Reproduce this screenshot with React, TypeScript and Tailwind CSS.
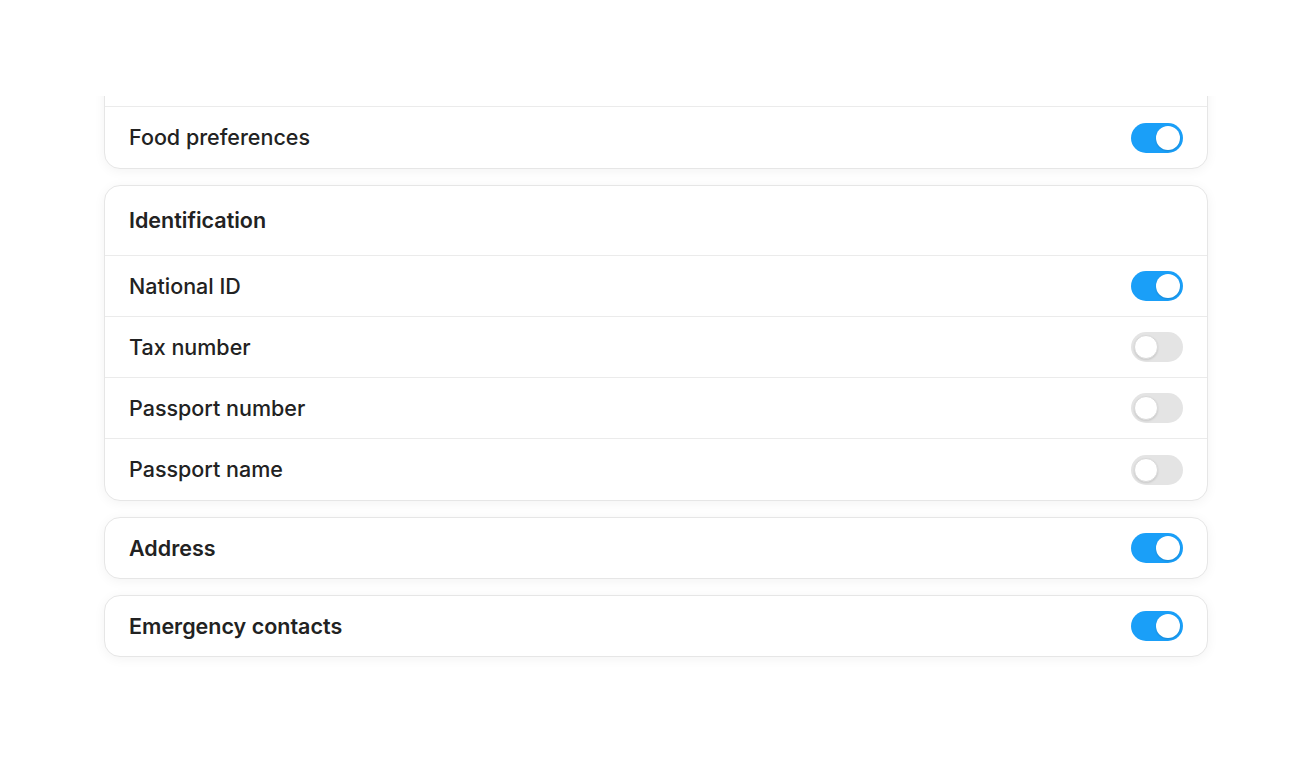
import React, { useState } from 'react';

interface ToggleProps {
  on: boolean;
  onChange: () => void;
}

function Toggle({ on, onChange }: ToggleProps) {
  return (
    <button
      onClick={onChange}
      className={
        on
          ? 'relative h-[30px] w-[52px] shrink-0 rounded-full bg-[#1a9ff8] transition-colors'
          : 'relative h-[30px] w-[52px] shrink-0 rounded-full bg-[#e4e4e4] transition-colors'
      }
    >
      <span
        className={
          on
            ? 'absolute top-[3px] left-[25px] h-[24px] w-[24px] rounded-full bg-white shadow-[0_1px_2px_rgba(0,0,0,0.15)] transition-all'
            : 'absolute top-[3px] left-[3px] h-[24px] w-[24px] rounded-full border border-[#d9d9d9] bg-white shadow-[0_1px_2px_rgba(0,0,0,0.12)] transition-all'
        }
      />
    </button>
  );
}

function Row({ label, on, onChange }: { label: string; on: boolean; onChange: () => void }) {
  return (
    <div className="flex h-[61px] items-center justify-between px-6">
      <span className="text-[21.5px] font-medium text-[#222]">{label}</span>
      <Toggle on={on} onChange={onChange} />
    </div>
  );
}

const cardClass =
  'overflow-hidden rounded-2xl border border-[#e6e6e6] bg-white shadow-[0_2px_12px_rgba(0,0,0,0.05)] divide-y divide-[#ebebeb]';

export default function App() {
  const [state, setState] = useState<Record<string, boolean>>({
    food: true,
    nationalId: true,
    tax: false,
    passportNumber: false,
    passportName: false,
    address: true,
    emergency: true,
  });

  function flip(key: string) {
    setState((s) => ({ ...s, [key]: !s[key] }));
  }

  return (
    <div
      className="min-h-screen bg-white"
      style={{ fontFamily: 'Inter, "Noto Sans", sans-serif' }}
    >
      <div className="pt-[96px]">
        {/* scrolled list: the first card's top is out of view */}
        <div className="h-[600px] overflow-hidden px-[104px]">
          <div className="-mt-[51px] flex flex-col gap-4 pb-8">
            <div className={cardClass}>
              <div className="h-[61px]" />
              <Row label="Food preferences" on={state.food} onChange={() => flip('food')} />
            </div>

            <div className={cardClass}>
              <div className="flex h-[70px] items-center px-6">
                <h2 className="text-[21.5px] font-semibold text-[#222]">Identification</h2>
              </div>
              <Row label="National ID" on={state.nationalId} onChange={() => flip('nationalId')} />
              <Row label="Tax number" on={state.tax} onChange={() => flip('tax')} />
              <Row label="Passport number" on={state.passportNumber} onChange={() => flip('passportNumber')} />
              <Row label="Passport name" on={state.passportName} onChange={() => flip('passportName')} />
            </div>

            <div className={cardClass}>
              <div className="flex h-[60px] items-center justify-between px-6">
                <h2 className="text-[21.5px] font-semibold text-[#222]">Address</h2>
                <Toggle on={state.address} onChange={() => flip('address')} />
              </div>
            </div>

            <div className={cardClass}>
              <div className="flex h-[60px] items-center justify-between px-6">
                <h2 className="text-[21.5px] font-semibold text-[#222]">Emergency contacts</h2>
                <Toggle on={state.emergency} onChange={() => flip('emergency')} />
              </div>
            </div>
          </div>
        </div>
      </div>
    </div>
  );
}
